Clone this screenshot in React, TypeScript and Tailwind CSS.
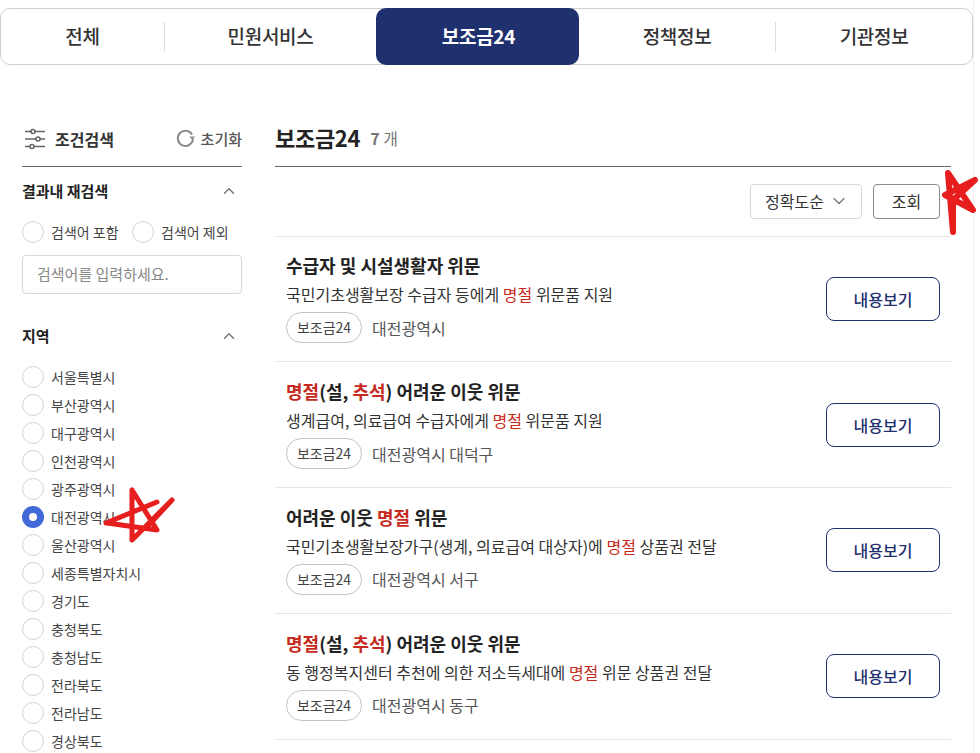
import { ChevronDown, ChevronUp } from "lucide-react";

const tabs = [
  { label: "전체", cls: "w-[164px] border-r border-[#dddddd]" },
  { label: "민원서비스", cls: "w-[211px]" },
  { label: "보조금24", cls: "" },
  { label: "정책정보", cls: "w-[197px] border-r border-[#dddddd]" },
  { label: "기관정보", cls: "flex-1" },
];

const regions = [
  "서울특별시", "부산광역시", "대구광역시", "인천광역시", "광주광역시", "대전광역시", "울산광역시",
  "세종특별자치시", "경기도", "충청북도", "충청남도", "전라북도", "전라남도", "경상북도",
];

const R = ({ children }: { children: string }) => <span className="text-[#c62a20]">{children}</span>;

const results = [
  {
    title: <>수급자 및 시설생활자 위문</>,
    desc: <>국민기초생활보장 수급자 등에게 <R>명절</R> 위문품 지원</>,
    org: "대전광역시",
  },
  {
    title: <><R>명절</R>(설, <R>추석</R>) 어려운 이웃 위문</>,
    desc: <>생계급여, 의료급여 수급자에게 <R>명절</R> 위문품 지원</>,
    org: "대전광역시 대덕구",
  },
  {
    title: <>어려운 이웃 <R>명절</R> 위문</>,
    desc: <>국민기초생활보장가구(생계, 의료급여 대상자)에 <R>명절</R> 상품권 전달</>,
    org: "대전광역시 서구",
  },
  {
    title: <><R>명절</R>(설, <R>추석</R>) 어려운 이웃 위문</>,
    desc: <>동 행정복지센터 추천에 의한 저소득세대에 <R>명절</R> 위문 상품권 전달</>,
    org: "대전광역시 동구",
  },
];

function Radio({ checked = false }: { checked?: boolean }) {
  return checked ? (
    <span className="w-[22px] h-[22px] shrink-0 rounded-full bg-[#4169d8] flex items-center justify-center">
      <span className="w-2 h-2 rounded-full bg-white" />
    </span>
  ) : (
    <span className="w-[22px] h-[22px] shrink-0 rounded-full border border-[#d4d4d4] bg-white" />
  );
}

function FilterIcon() {
  return (
    <svg width="20" height="22" viewBox="0 0 20 22" fill="none" stroke="#666666" strokeWidth="1.6">
      <path d="M0 3.5h6M10 3.5h10M0 11h11M15 11h5M0 18.500h5M9 18.500h11" />
      <circle cx="8" cy="3.500" r="2" />
      <circle cx="13" cy="11" r="2" />
      <circle cx="7" cy="18.500" r="2" />
    </svg>
  );
}

function ResetIcon() {
  return (
    <svg width="19" height="19" viewBox="0 0 19 19" fill="none">
      <path d="M16 5.500A7.600 7.600 0 1 0 17 10" stroke="#8a8a8a" strokeWidth="2" />
      <path d="M13.500 7.500h5.500l-2.750 3.500z" fill="#8a8a8a" />
    </svg>
  );
}

export default function App() {
  return (
    <div className="relative w-[980px] h-[753px] overflow-hidden bg-white font-['Noto_Sans_CJK_KR','Noto_Sans',sans-serif]">
      <div className="w-[974px] h-full border-r border-[#eeeeee] pt-2">
        <nav className="flex items-center h-[57px] border border-[#cfcfcf] rounded-[10px] w-[973px]">
          {tabs.map((t, i) => (
            <div
              key={t.label}
              className={
                i === 2
                  ? "w-[203px] h-[57px] -my-px pl-[2px] rounded-[10px] bg-[#1f306f] text-white flex items-center justify-center text-[19px] font-bold tracking-[-0.3px]"
                  : "h-[30px] flex items-center justify-center text-[19px] font-medium tracking-[-0.3px] text-[#333333] " + t.cls
              }
            >
              {t.label}
            </div>
          ))}
        </nav>

        <div className="flex pl-[22px] pr-[22px] pt-[57px] gap-[33px]">
          <aside className="w-[220px] shrink-0">
            <div className="h-[45px] flex items-start justify-between border-b border-[#666666]">
              <div className="flex items-center gap-[10px] h-[33px] pl-[3px]">
                <FilterIcon />
                <span className="text-[16px] font-bold text-[#333333] leading-none">조건검색</span>
              </div>
              <div className="flex items-center gap-[6px] h-[33px]">
                <ResetIcon />
                <span className="text-[15px] font-medium text-[#555555] leading-none">초기화</span>
              </div>
            </div>

            <div className="flex items-center justify-between h-[48px]">
              <span className="text-[15px] font-bold text-[#222222]">결과내 재검색</span>
              <ChevronUp size={18} className="text-[#777777] mr-[4px]" />
            </div>
            <div className="flex items-center h-[22px] mt-[6px] text-[14px] text-[#444444]">
              <Radio />
              <span className="ml-[7px] w-[81px]">검색어 포함</span>
              <Radio />
              <span className="ml-[7px]">검색어 제외</span>
            </div>
            <div className="mt-[12px] h-[39px] border border-[#d8d8d8] rounded-[4px] flex items-center pl-[14px] text-[15px] text-[#888888]">
              검색어를 입력하세요.
            </div>

            <div className="flex items-center justify-between h-[48px] mt-[18px]">
              <span className="text-[15px] font-bold text-[#222222]">지역</span>
              <ChevronUp size={18} className="text-[#777777] mr-[4px]" />
            </div>
            <ul className="flex flex-col gap-[6px] mt-[6px]">
              {regions.map((r) => (
                <li key={r} className="flex items-center h-[22px] text-[14px] text-[#444444]">
                  <Radio checked={r === "대전광역시"} />
                  <span className="ml-[7px]">{r}</span>
                </li>
              ))}
            </ul>
          </aside>

          <main className="w-[676px]">
            <div className="h-[45px] flex items-start border-b border-[#666666] gap-[10px]">
              <span className="text-[22px] font-bold text-[#222222] leading-[30px] tracking-[-0.3px]">보조금24</span>
              <span className="text-[16px] font-bold text-[#777777] leading-[32px]">7 <span className="font-normal">개</span></span>
            </div>
            <div className="h-[69.6px] flex items-center justify-end gap-[11px] border-b border-[#e5e5e5] pr-[11px]">
              <div className="w-[112px] h-[35px] border border-[#d8d8d8] rounded-[4px] flex items-center justify-between pl-[14px] pr-[12px] text-[16px] text-[#333333]">
                정확도순
                <ChevronDown size={20} strokeWidth={1.6} className="text-[#777777]" />
              </div>
              <div className="w-[67px] h-[35px] border border-[#8a8a8a] rounded-[4px] flex items-center justify-center text-[16px] text-[#333333]">
                조회
              </div>
            </div>
            {results.map((item, i) => (
              <div key={i} className="h-[125.75px] flex items-center justify-between border-b border-[#e5e5e5] pl-[11px] pr-[11px]">
                <div className="-mt-[1px]">
                  <div className="text-[18px] font-bold leading-[24px] text-[#222222]">{item.title}</div>
                  <div className="text-[16px] leading-[22px] mt-[6px] text-[#333333]">{item.desc}</div>
                  <div className="flex items-center mt-[7px]">
                    <span className="w-[76px] h-[31px] border border-[#c4c4c4] rounded-full flex items-center justify-center text-[14px] text-[#444444]">보조금24</span>
                    <span className="ml-[10px] text-[16px] text-[#555555]">{item.org}</span>
                  </div>
                </div>
                <div className="w-[114px] h-[44px] border border-[#1f306f] rounded-[8px] flex items-center justify-center text-[16px] font-medium text-[#1f306f]">
                  내용보기
                </div>
              </div>
            ))}
          </main>
        </div>
      </div>

      {/* hand drawn marks */}
      <svg className="absolute left-0 top-0 pointer-events-none" width="980" height="753" fill="none" stroke="#e61e1e" strokeWidth="5" strokeLinecap="round" strokeLinejoin="round">
        <path d="M106 523 L157 502 M132 490 L157 530 L107 523 M132 490 L132 540 L172 500 L147 527" />
        <path strokeWidth="6" d="M953 232 L948 173 L973 210 L945 195 L975 180 L953 200 Z" />
      </svg>
    </div>
  );
}
